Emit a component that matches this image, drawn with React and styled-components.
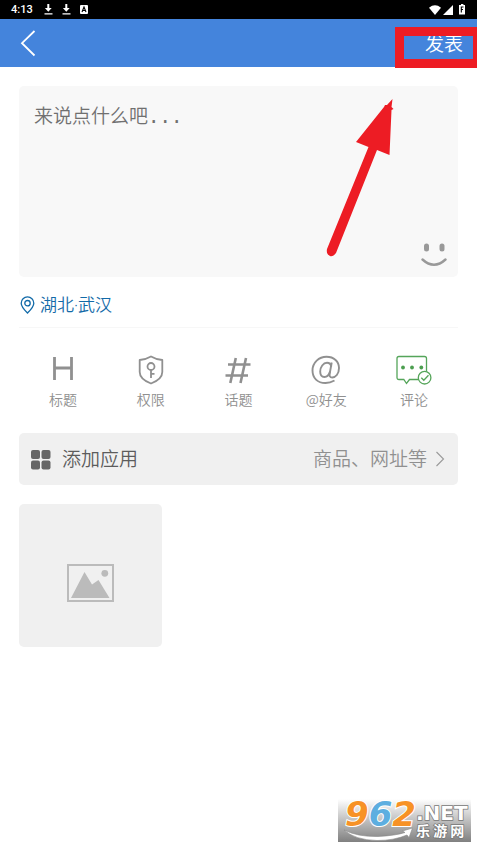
import React from "react";
import styled, { createGlobalStyle } from "styled-components";

const GlobalStyle = createGlobalStyle`
  *, *::before, *::after { box-sizing: border-box; }
  body {
    margin: 0;
    background: #fff;
    font-family: "Noto Sans CJK SC", sans-serif;
    font-weight: 350;
  }
  button, textarea { font-family: inherit; font-weight: inherit; }
  svg { display: block; }
`;

const Page = styled.div`
  position: relative;
  display: flex;
  flex-direction: column;
  min-height: 100vh;
`;

const StatusBar = styled.div`
  display: flex;
  align-items: center;
  justify-content: space-between;
  height: 19px;
  padding: 0 10px 0 11px;
  background: #000;
  color: #fff;
`;

const StatusGroup = styled.div`
  display: flex;
  align-items: center;
  gap: ${(p) => p.$gap}px;
`;

const Clock = styled.time`
  margin-right: 2px;
  font: 500 11px/19px Roboto, sans-serif;
`;

const Header = styled.header`
  position: relative;
  display: flex;
  align-items: center;
  justify-content: space-between;
  height: 48px;
  padding: 0 14px;
  background: #4484dc;
  color: #fff;
`;

const PlainButton = styled.button`
  display: flex;
  align-items: center;
  justify-content: center;
  padding: 0;
  border: 0;
  background: none;
  color: inherit;
  cursor: pointer;
`;

const BackButton = styled(PlainButton)`
  width: 28px;
  height: 48px;
`;

const PublishButton = styled(PlainButton)`
  height: 46px;
  font-size: 19px;
  line-height: 28px;
`;

const Highlight = styled.div`
  position: absolute;
  top: 8px;
  right: 0;
  width: 82px;
  height: 41px;
  border: 9px solid #ed1c24;
  border-right-width: 4px;
  pointer-events: none;
`;

const Content = styled.main`
  display: flex;
  flex-direction: column;
  padding: 19px;
`;

const Composer = styled.div`
  position: relative;
  display: flex;
`;

const Editor = styled.textarea`
  flex: 1;
  min-width: 0;
  height: 191px;
  padding: 16px 15px;
  border: 0;
  border-radius: 5px;
  outline: 0;
  resize: none;
  background: #f8f8f8;
  color: #333;
  font: 350 19px/28px "DejaVu Sans Mono", "Noto Sans CJK SC", monospace;
  &::placeholder { color: #707070; opacity: 1; }
`;

const EmojiButton = styled(PlainButton)`
  position: absolute;
  right: 10px;
  bottom: 8px;
  color: #999;
`;

const Arrow = styled.svg`
  position: absolute;
  top: 12px;
  right: 63px;
  pointer-events: none;
`;

const LocationRow = styled.div`
  display: flex;
  height: 51px;
  padding-top: 6px;
  border-bottom: 1px solid #f7f7f7;
`;

const LocationButton = styled(PlainButton)`
  gap: 5px;
  height: 44px;
  padding-left: 1px;
  color: #126aa8;
  font-family: "Open Sans", "Noto Sans CJK SC", sans-serif;
  font-size: 17px;
  line-height: 24px;
`;

const Tools = styled.nav`
  display: grid;
  grid-template-columns: repeat(5, 1fr);
  padding: 25px 0 24px;
`;

const ToolButton = styled(PlainButton)`
  flex-direction: column;
  gap: 4px;
  color: #909090;
  font-size: 14px;
  line-height: 20px;
`;

const AddBar = styled.button`
  display: flex;
  align-items: center;
  height: 52px;
  padding: 0 13px 0 11px;
  border: 0;
  border-radius: 5px;
  background: #f0f0f0;
  color: #5c5c5c;
  font-size: 19px;
  line-height: 28px;
  cursor: pointer;
`;

const AddTitle = styled.span`
  flex: 1;
  margin-left: 11px;
  padding-bottom: 2px;
  text-align: left;
`;

const AddHint = styled.span`
  margin-right: 8px;
  padding-bottom: 2px;
  color: #909090;
`;

const ImageButton = styled(PlainButton)`
  width: 143px;
  height: 143px;
  margin-top: 19px;
  padding-top: 14px;
  border-radius: 5px;
  background: #f0f0f0;
`;

const Watermark = styled.div`
  position: absolute;
  right: 6px;
  bottom: 2px;
`;

function DownloadIcon() {
  return (
    <svg width="9" height="11" viewBox="0 0 9 11" fill="#fff">
      <path d="M3.3 0h2v4h2.4L4.3 7.8.9 4h2.4zM.5 9.3h8v1.3h-8z" />
    </svg>
  );
}

function StatusIcons() {
  return (
    <StatusGroup $gap={2}>
      <svg width="12" height="10" viewBox="0 0 12 10" fill="#fff">
        <path d="M0 2.7Q6-2 12 2.7L6 10z" />
      </svg>
      <svg width="10" height="10" viewBox="0 0 10 10" fill="#fff">
        <path d="M10 0v10H0z" />
      </svg>
      <svg width="12" height="11" viewBox="0 0 12 11">
        <path d="M6 0h2.400v1H10v9.600H4V1h2z" fill="#fff" />
        <path d="M6.300 8.600V3h2.200M6.300 5.500H8" fill="none" stroke="#000" strokeWidth="1.100" />
      </svg>
    </StatusGroup>
  );
}

function HeadingIcon() {
  return (
    <svg width="36" height="32" viewBox="0 0 36 32" fill="none" stroke="currentColor" strokeWidth="2.800">
      <path d="M9.500 4v23M26.500 4v23M9.500 15H26.500" />
    </svg>
  );
}

function ShieldIcon() {
  return (
    <svg width="36" height="32" viewBox="0 0 36 32" fill="none" stroke="currentColor" strokeWidth="1.800">
      <path d="M18 3.500Q23 6.500 29.300 7v12c0 6-6 9.500-11.300 11.500C12.700 28.500 6.700 25 6.700 19V7Q13 6.500 18 3.500z" strokeLinejoin="round" />
      <circle cx="18" cy="13.500" r="3.500" />
      <path d="M18 17V25M18 20.800h3.500" />
    </svg>
  );
}

function HashIcon() {
  return (
    <svg width="36" height="32" viewBox="0 0 36 32" fill="none" stroke="currentColor" strokeWidth="2.600">
      <path d="M15.800 5l-5.500 25M26 5l-5.500 25M8 11.500h22.500M5.500 22.500H28" />
    </svg>
  );
}

function AtIcon() {
  return (
    <svg width="36" height="32" viewBox="0 0 36 32" fill="none" stroke="currentColor" strokeWidth="1.900">
      <path d="M26.500 27.500c-3 1.700-5.500 2.500-9 2.500C9.500 30 4.500 25 4.500 17.500 4.500 9.500 11 3.800 18.500 3.800c7.500 0 12.500 4.700 12.500 11.200 0 6-3.500 9.500-6.800 9.500-2.400 0-2.900-1.600-2.500-4l2-11" />
      <path d="M23.300 13.500c-.5-2.300-2-3.700-4.300-3.700-3.700 0-6.800 4.200-6.800 8.700 0 3.500 1.600 5.500 4.200 5.500 2.800 0 4.800-2.500 5.600-5.500" />
    </svg>
  );
}

function CommentIcon() {
  return (
    <svg width="36" height="32" viewBox="0 0 36 32" fill="none" stroke="#55a55a" strokeWidth="1.300">
      <path d="M22.500 26.500H13.500L10.500 30.500 7.800 26.500H3Q1 26.500 1 24.500V5.500Q1 3.500 3 3.500H28.500Q30.500 3.500 30.500 5.500V18.500" />
      <g fill="#4c9e50" stroke="none">
        <circle cx="7" cy="14.500" r="1.900" />
        <circle cx="16" cy="14.500" r="1.900" />
        <circle cx="25.300" cy="14.500" r="1.900" />
      </g>
      <circle cx="28.600" cy="24.700" r="6.300" />
      <path d="M25.300 24.700l2.500 2.600 4.700-5" />
    </svg>
  );
}

const tools = [
  { label: "标题", Icon: HeadingIcon },
  { label: "权限", Icon: ShieldIcon },
  { label: "话题", Icon: HashIcon },
  { label: "@好友", Icon: AtIcon },
  { label: "评论", Icon: CommentIcon },
];

function SiteMark() {
  return (
    <Watermark>
      <svg width="133" height="54" viewBox="0 -7 133 54" role="img" aria-label="962.NET 乐游网">
        <defs>
          <linearGradient id="band" x2="0" y2="1">
            <stop offset="0" stopColor="#fff" />
            <stop offset="1" stopColor="#808080" />
          </linearGradient>
        </defs>
        <rect width="133" height="43" fill="url(#band)" />
        <text
          x="7"
          y="27"
          fontFamily="DejaVu Sans, sans-serif"
          fontWeight="700"
          fontStyle="italic"
          fontSize="34"
          stroke="#fff"
          strokeWidth="2"
          paintOrder="stroke"
          fill="#f79226"
        >
          9<tspan fill="#5daee0">6</tspan>2
        </text>
        <path d="M6 31Q20 38 40 37.500 58 36.500 67 33.500L64.500 32 74.500 29 71 38.500 69 36Q56 41.500 39 41.500 17 41 6 31z" fill="#fff" stroke="#888" strokeWidth=".6" />
        <g fill="#fff" stroke="#777" strokeWidth="1.500" paintOrder="stroke" fontWeight="700">
          <text x="78" y="21" fontFamily="DejaVu Sans, sans-serif" fontSize="20">.NET</text>
          <text x="78" y="37" fontFamily="Noto Sans CJK SC, sans-serif" fontSize="14">乐 游 网</text>
        </g>
      </svg>
    </Watermark>
  );
}

export default function App() {
  return (
    <Page>
      <GlobalStyle />
      <StatusBar>
        <StatusGroup $gap={9}>
          <Clock>4:13</Clock>
          <DownloadIcon />
          <DownloadIcon />
          <svg width="8" height="9" viewBox="0 0 8 9">
            <rect width="8" height="9" rx="1" fill="#fff" />
            <path d="M2 7l2-5 2 5M2.700 5.500h2.600" fill="none" stroke="#000" strokeWidth="1.100" />
          </svg>
        </StatusGroup>
        <StatusIcons />
      </StatusBar>
      <Header>
        <BackButton aria-label="返回">
          <svg width="16" height="28" viewBox="0 0 16 28" fill="none" stroke="#fff" strokeWidth="1.800">
            <path d="M14.500 2L2 14.200 14.500 26.500" />
          </svg>
        </BackButton>
        <PublishButton>发表</PublishButton>
        <Highlight />
      </Header>
      <Content>
        <Composer>
          <Editor aria-label="内容" placeholder="来说点什么吧..." />
          <EmojiButton aria-label="表情">
            <svg width="28" height="27" viewBox="0 0 28 27">
              <rect x="4" y="1.500" width="5" height="8" rx="2.500" fill="currentColor" />
              <rect x="19.500" y="1.500" width="5" height="8" rx="2.500" fill="currentColor" />
              <path d="M2.500 17.500Q14 28 25.500 17.500" fill="none" stroke="currentColor" strokeWidth="2.400" strokeLinecap="round" />
            </svg>
          </EmojiButton>
          <Arrow width="70" height="160" viewBox="0 0 70 160" fill="#ed1c24">
            <path d="M67.500 1L66.500 9 68.500 11 66.500 12 64.500 57 52 52 11 155Q8 159 5 158 1 156 2 151L43.500 49 31 44 59 9 60 7 62 7z" />
          </Arrow>
        </Composer>
        <LocationRow>
          <LocationButton>
            <svg width="15" height="18" viewBox="0 0 15 18" fill="none" stroke="currentColor" strokeWidth="1.300">
              <path d="M7.500 17C4.500 14 1.200 10.800 1.200 7.200a6.300 6.300 0 0 1 12.600 0C13.800 10.800 10.500 14 7.500 17z" />
              <circle cx="7.500" cy="7.200" r="2.700" />
            </svg>
            湖北·武汉
          </LocationButton>
        </LocationRow>
        <Tools>
          {tools.map(({ label, Icon }) => (
            <ToolButton key={label}>
              <Icon />
              {label}
            </ToolButton>
          ))}
        </Tools>
        <AddBar>
          <svg width="21" height="21" viewBox="0 0 21 21" fill="#666">
            <rect x="1" y="1" width="9" height="9" rx="2" />
            <rect x="11.500" y="1" width="9" height="9" rx="2" />
            <rect x="1" y="11.500" width="9" height="9" rx="2" />
            <rect x="11.500" y="11.500" width="9" height="9" rx="2" />
          </svg>
          <AddTitle>添加应用</AddTitle>
          <AddHint>商品、网址等</AddHint>
          <svg width="10" height="16" viewBox="0 0 10 16" fill="none" stroke="#999" strokeWidth="1.100">
            <path d="M1.500 1L8.500 8 1.500 15" />
          </svg>
        </AddBar>
        <ImageButton aria-label="添加图片">
          <svg width="47" height="38" viewBox="0 0 47 38" fill="#bbb">
            <path d="M0 0H47V38H0zM2 2V36H45V2z" fillRule="evenodd" />
            <path d="M4 34L17.500 8 25 20.500 31.500 16 42.500 34z" />
            <circle cx="37.800" cy="9.300" r="3.400" />
          </svg>
        </ImageButton>
      </Content>
      <SiteMark />
    </Page>
  );
}
